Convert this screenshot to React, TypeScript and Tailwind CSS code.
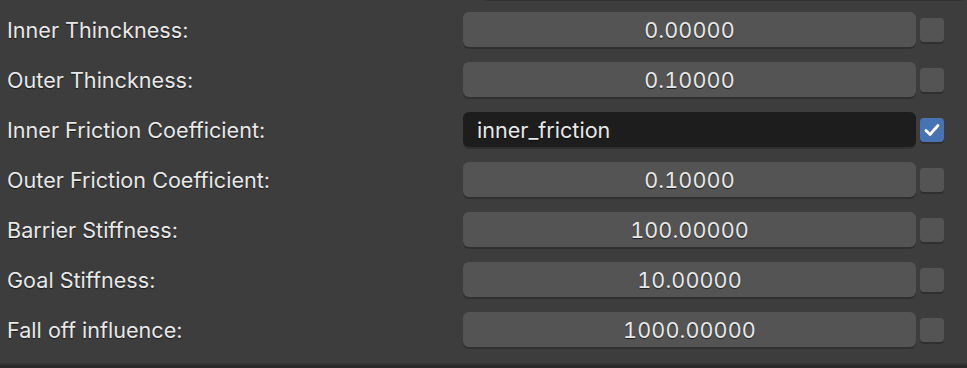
import React from "react";

type Row = { label: string; value: string; text?: boolean; checked?: boolean };

const rows: Row[] = [
  { label: "Inner Thinckness:", value: "0.00000" },
  { label: "Outer Thinckness:", value: "0.10000" },
  { label: "Inner Friction Coefficient:", value: "inner_friction", text: true, checked: true },
  { label: "Outer Friction Coefficient:", value: "0.10000" },
  { label: "Barrier Stiffness:", value: "100.00000" },
  { label: "Goal Stiffness:", value: "10.00000" },
  { label: "Fall off influence:", value: "1000.00000" },
];

const font = { fontFamily: "Inter, 'Noto Sans', 'DejaVu Sans', sans-serif" };

export default function App() {
  return (
    <div
      className="w-[967px] h-[368px] bg-[#3d3d3d] flex flex-col overflow-hidden text-[#e8e8e8] text-[21.6px] [text-shadow:0_1px_1px_rgba(0,0,0,0.6)]"
      style={font}
    >
      <div className="h-[1px] ml-[485px] w-[478px] bg-[#323232] rounded-b-[4px]" />
      <div className="flex flex-col gap-[15px] pt-[11px]">
        {rows.map((r) => (
          <div key={r.label} className="flex items-center h-[35px]">
            <div className="w-[463px] pl-[7px] pt-[2px] leading-none">{r.label}</div>
            <div
              className={
                r.text
                  ? "w-[453px] h-[35px] rounded-[6px] bg-[#1d1d1d] shadow-[0_2px_0_#303030] flex items-center pl-[14px] pt-[2px] leading-none"
                  : "w-[453px] h-[35px] rounded-[6px] bg-[#545454] shadow-[0_2px_0_#303030] flex items-center justify-center pt-[2px] leading-none tabular-nums tracking-[0.1px]"
              }
            >
              {r.value}
            </div>
            <div
              className={
                r.checked
                  ? "ml-[4px] w-[24px] h-[24px] rounded-[4px] bg-[#4772b3] shadow-[0_2px_0_#303030] flex items-center justify-center"
                  : "ml-[4px] w-[24px] h-[24px] rounded-[4px] bg-[#545454] shadow-[0_2px_0_#303030]"
              }
            >
              {r.checked && (
                <svg width="18" height="18" viewBox="0 0 18 18">
                  <path
                    d="M3 9.5 L7 13.5 L15 4.5"
                    fill="none"
                    stroke="#ffffff"
                    strokeWidth="2.8"
                    strokeLinecap="round"
                    strokeLinejoin="round"
                  />
                </svg>
              )}
            </div>
          </div>
        ))}
      </div>
      <div className="mt-auto h-[2px] bg-[#353535]" />
      <div className="h-[3px] bg-[#2a2a2a]" />
    </div>
  );
}
